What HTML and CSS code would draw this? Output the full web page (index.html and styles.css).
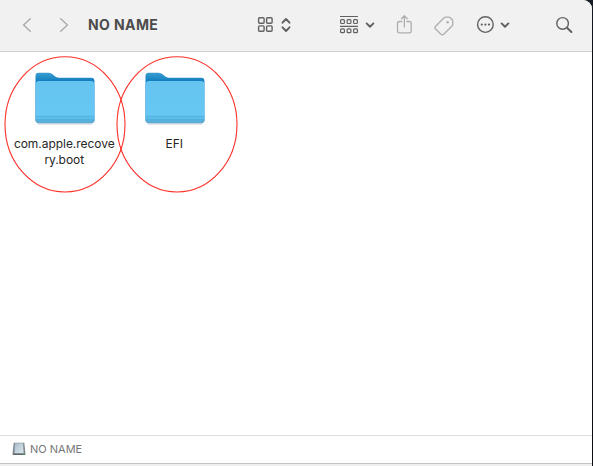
FILE: index.html
```html
<!DOCTYPE html>
<html lang="en">
<head>
<meta charset="utf-8">
<title>NO NAME</title>
<link rel="stylesheet" href="styles.css">
</head>
<body>
<svg class="defs" width="0" height="0" aria-hidden="true">
  <defs>
    <linearGradient id="back" x1="0" y1="0" x2="0" y2="1"><stop offset="0" stop-color="#3a9dd0"/><stop offset=".12" stop-color="#1f8ac6"/><stop offset=".22" stop-color="#0b73b6"/></linearGradient>
    <linearGradient id="front" x1="0" y1="0" x2="0" y2="1"><stop offset="0" stop-color="#66c4f0"/><stop offset="1" stop-color="#66c8f5"/></linearGradient>
    <symbol id="folder" viewBox="0 0 64 56">
      <path d="M2.5 49V6Q2.5 2.8 5.7 2.8H15.5Q18 2.8 20 4.6L21.6 6.1Q23.4 7.8 26 7.8H58.4Q61.4 7.8 61.4 11V49Z" fill="url(#back)"/>
      <path d="M2.6 14.5Q2.6 11 5.7 11H58.3Q61.4 11 61.4 14.5V49.7Q61.4 52.7 58.4 52.7H5.6Q2.6 52.7 2.6 49.7Z" fill="url(#front)"/>
      <path d="M2.6 46H61.4V49.7Q61.4 52.7 58.4 52.7H5.6Q2.6 52.7 2.6 49.7Z" fill="#5fbeea"/>
      <path d="M2.6 49.3H61.4V49.7Q61.4 52.7 58.4 52.7H5.6Q2.6 52.7 2.6 49.7Z" fill="#56b1de"/>
      <path d="M2.6 46.2H61.4M2.6 49.4H61.4" stroke="#4ca9d8" stroke-width=".6"/>
      <path d="M2.8 49.8Q2.8 53 5.8 53H58.2Q61.2 53 61.2 49.8" fill="none" stroke="#5f9fbe" stroke-width=".8"/>
      <path d="M4.5 54H59.5" stroke="#bcc5ca" stroke-width=".8"/>
    </symbol>
  </defs>
</svg>
<div class="window">
  <header class="toolbar">
    <svg class="back" width="10" height="16" viewBox="0 0 10 16"><path d="M8.3 1.7 1.6 8l6.7 6.3"/></svg>
    <svg class="forward" width="10" height="16" viewBox="0 0 10 16"><path d="M1.7 1.7 8.4 8l-6.7 6.3"/></svg>
    <h1 class="title">NO NAME</h1>
    <svg class="grid" width="16" height="16" viewBox="0 0 16 16"><rect x="1.6" y=".8" width="5.5" height="5.4" rx="1"/><rect x="9.6" y=".8" width="5.5" height="5.4" rx="1"/><rect x="1.6" y="8.9" width="5.5" height="5.4" rx="1"/><rect x="9.6" y="8.9" width="5.5" height="5.4" rx="1"/></svg>
    <svg class="updown" width="10" height="16" viewBox="0 0 10 16"><path d="M1.5 5.7 5 2l3.5 3.7M1.5 10.3 5 14l3.5-3.7"/></svg>
    <svg class="group" width="20" height="20" viewBox="0 0 20 20"><path d="M1 1.5h18M1 11.3h18"/><rect x="1.6" y="4.6" width="3.8" height="3.9" rx=".9"/><rect x="8.1" y="4.6" width="3.8" height="3.9" rx=".9"/><rect x="14.6" y="4.6" width="3.8" height="3.9" rx=".9"/><rect x="1.6" y="13.8" width="3.8" height="3.9" rx=".9"/><rect x="8.1" y="13.8" width="3.8" height="3.9" rx=".9"/><rect x="14.6" y="13.8" width="3.8" height="3.9" rx=".9"/></svg>
    <svg class="down down-group" width="10" height="8" viewBox="0 0 10 8"><path d="M1.6 2.4 5 5.7l3.4-3.3"/></svg>
    <svg class="share" width="16" height="20" viewBox="0 0 16 20"><path d="M5.8 6.5H3.5Q1.5 6.5 1.5 8.5v7.3Q1.5 17.8 3.5 17.8H13.2Q15.2 17.8 15.2 15.8V8.5Q15.2 6.5 13.2 6.5H10.9M8.35 12V.9M5.5 3.7 8.35.8l2.85 2.9"/></svg>
    <svg class="tag" width="20" height="20" viewBox="0 0 20 20"><path d="M1.4 10.5 9.8 2Q10.6 1.2 11.8 1.2H14.7Q15.7 1.2 16.5 2L18 3.5Q18.8 4.3 18.8 5.4V8Q18.8 9.1 18 10L9.7 18.2Q8.3 19.3 7 18.2L1.4 12.7Q.5 11.7 1.4 10.5Z"/><circle class="dot" cx="13.7" cy="6.2" r="1.2"/></svg>
    <svg class="more" width="18" height="18" viewBox="0 0 18 18"><circle cx="9.4" cy="8.6" r="7.8"/><g class="dots"><circle cx="5.8" cy="8.6" r="1.1"/><circle cx="9.4" cy="8.6" r="1.1"/><circle cx="13" cy="8.6" r="1.1"/></g></svg>
    <svg class="down down-more" width="10" height="8" viewBox="0 0 10 8"><path d="M1.6 2.4 5 5.7l3.4-3.3"/></svg>
    <svg class="search" width="18" height="18" viewBox="0 0 18 18"><circle cx="7.6" cy="7.4" r="5.8"/><path class="handle" d="m12 11.8 4.4 4.2"/></svg>
  </header>
  <main class="files">
    <figure class="file">
      <svg class="folder" width="64" height="56"><use href="#folder"/></svg>
      <figcaption><span class="line">com.apple.recove</span><span class="line">ry.boot</span></figcaption>
      <svg class="ring" width="124" height="139" viewBox="0 0 124 139"><ellipse cx="62" cy="69.4" rx="60" ry="67.6"/></svg>
    </figure>
    <figure class="file">
      <svg class="folder" width="64" height="56"><use href="#folder"/></svg>
      <figcaption><span class="line">EFI</span></figcaption>
      <svg class="ring ring-efi" width="124" height="139" viewBox="0 0 124 139"><ellipse cx="62" cy="69.4" rx="60" ry="67.6"/></svg>
    </figure>
  </main>
  <footer class="pathbar">
    <svg width="14" height="14" viewBox="0 0 14 14"><defs><linearGradient id="disk" x1="0" y1="0" x2="1" y2="1"><stop offset="0" stop-color="#a9bccb"/><stop offset="1" stop-color="#dce8ed"/></linearGradient></defs><path d="M1.7.8H12.3L13.4 11V13H.6V11Z" fill="#7d868c"/><path d="M2.9 1.3H11.1L11.6 11.2H2.4Z" fill="url(#disk)"/><path d="M1 12.3H13" stroke="#596164"/><path d="M11 12.2h1.6" stroke="#4fb565"/></svg>
    <span class="volume">NO NAME</span>
  </footer>
  <div class="edge"></div>
</div>
</body>
</html>
```
FILE: styles.css
```css
* { box-sizing: border-box; }
body {
  margin: 0;
  height: 466px;
  overflow: hidden;
  background: linear-gradient(#171b24, #0b0d12 70px, #0b0d12);
  font-family: Inter, "Liberation Sans", sans-serif;
}
.defs { position: absolute; }
.window {
  display: flex;
  flex-direction: column;
  width: 592px;
  height: 466px;
  overflow: hidden;
  border-top-right-radius: 9px;
  background: #fff;
}
.toolbar {
  display: flex;
  flex: none;
  align-items: center;
  height: 52px;
  padding: 0 19px 2px 22px;
  border-bottom: 1px solid #cfcfcf;
  background: #f1f1f1;
}
.toolbar svg {
  flex: none;
  fill: none;
  stroke: #616161;
  stroke-width: 1.4;
  stroke-linecap: round;
  stroke-linejoin: round;
}
.toolbar .back, .toolbar .forward { stroke: #acacac; stroke-width: 1.5; }
.forward { margin-left: 27px; }
.title {
  width: 169px;
  margin: 0 0 0 19px;
  color: #4b4b4b;
  font-size: 14px;
  font-weight: 700;
  line-height: 18px;
  letter-spacing: .4px;
  white-space: nowrap;
}
.updown { margin-left: 8px; }
.toolbar .updown, .toolbar .down { stroke-width: 1.9; }
.group { margin-left: 48px; }
.toolbar .group { stroke-width: 1.2; stroke-linecap: butt; }
.down-group { margin-left: 6px; }
.share { margin-left: 21px; }
.toolbar .share, .toolbar .tag { stroke: #aeaeae; stroke-width: 1.3; }
.toolbar .tag { margin-left: 22px; margin-top: 2px; }
.toolbar .tag .dot { fill: #aeaeae; stroke: none; }
.more { margin-left: 22px; }
.dots { fill: #616161; stroke: none; }
.down-more { margin-left: 6px; }
.search { margin-left: auto; }
.search .handle { stroke-width: 2; }
.files {
  display: flex;
  flex: 1;
  gap: 6px;
  padding: 18px 0 0 13px;
}
.file { position: relative; width: 104px; margin: 0; }
.folder { display: block; margin: 0 auto; }
figcaption {
  margin: 10px 1.5px 0 0;
  color: #262626;
  font-size: 12px;
  line-height: 16px;
  letter-spacing: -.05px;
  text-align: center;
  white-space: nowrap;
}
.line { display: block; }
.ring {
  position: absolute;
  top: -15px;
  left: -10px;
  fill: none;
  stroke: #fa3128;
  stroke-width: 1.1;
}
.ring-efi { left: -8px; }
.pathbar {
  display: flex;
  flex: none;
  gap: 4px;
  align-items: center;
  height: 28px;
  padding: 0 0 1px 12px;
  border-top: 1px solid #dfdfdf;
  color: #777;
  font-size: 11px;
  line-height: 14px;
}
.edge { flex: none; height: 3px; border-top: 1px solid #c4c4c4; background: #efefef; }
```
